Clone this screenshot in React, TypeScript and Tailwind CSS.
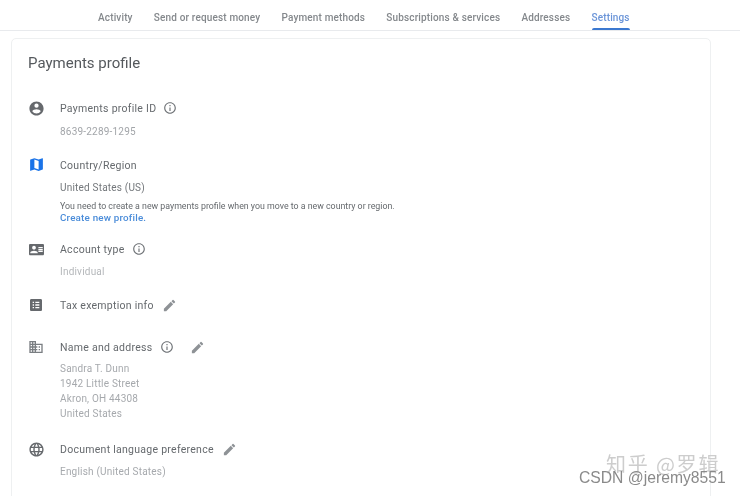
import React from "react";

const Icon = ({ d, className = "" }: { d: string; className?: string }) => (
  <svg viewBox="0 0 24 24" className={className} fill="currentColor"><path d={d} /></svg>
);

const PENCIL = "M3 17.25V21h3.75L17.81 9.94l-3.75-3.75L3 17.25zM20.71 7.04a1 1 0 0 0 0-1.41l-2.34-2.34a1 1 0 0 0-1.41 0l-1.83 1.83 3.75 3.75 1.83-1.83z";
const INFO = "M11 7h2v2h-2zm0 4h2v6h-2zm1-9C6.48 2 2 6.48 2 12s4.48 10 10 10 10-4.48 10-10S17.52 2 12 2zm0 18c-4.41 0-8-3.59-8-8s3.59-8 8-8 8 3.59 8 8-3.59 8-8 8z";

const Info = ({ className = "" }: { className?: string }) => <Icon d={INFO} className={`w-[14px] h-[14px] -translate-y-px text-[#6f7377] ${className}`} />;
const Pencil = ({ className = "" }: { className?: string }) => <Icon d={PENCIL} className={`w-[15px] h-[15px] -translate-y-px text-[#8e9296] ${className}`} />;

const Row = ({ icon, label, extra, mt, children }: { icon: React.ReactNode; label: string; extra?: React.ReactNode; mt: string; children?: React.ReactNode }) => (
  <div className={`flex ${mt}`}>
    <div className="w-[32px] shrink-0 h-[18px] flex items-center -translate-y-px text-[#66696d]">{icon}</div>
    <div className="min-w-0">
      <div className="h-[18px] flex items-center text-[10.5px] tracking-[0.27px] text-[#65696d]">
        <span>{label}</span>
        {extra}
      </div>
      {children}
    </div>
  </div>
);

const Value = ({ children, className = "" }: { children: React.ReactNode; className?: string }) => (
  <div className={`text-[10px] leading-[15px] tracking-[0.2px] ${className}`}>{children}</div>
);

const tabs = ["Activity", "Send or request money", "Payment methods", "Subscriptions & services", "Addresses", "Settings"];

export default function App() {
  return (
    <div className="relative w-[740px] h-[496px] overflow-hidden bg-white blur-[0.3px] font-['Roboto',sans-serif]">
      <nav className="h-[31px] border-b border-[#e8eaed] flex pl-[98px] gap-[21.2px]">
        {tabs.map((t) => (
          <div key={t} className={`relative h-[30px] pt-[11px] text-[10px] leading-[14px] font-medium tracking-[0.15px] ${t === "Settings" ? "text-[#6a94d8]" : "text-[#84888c]"}`}>
            {t}
            {t === "Settings" && <div className="absolute left-[1px] right-0 bottom-0 h-[2px] bg-[#3b78d0] rounded-t" />}
          </div>
        ))}
      </nav>
      <main className="ml-[11px] mt-[7px] w-[700px] h-[500px] border border-[#eef0f1] rounded-[5px] pl-[16px] pt-[14px]">
        <h1 className="text-[15px] leading-[20px] text-[#55595d]">Payments profile</h1>
        <Row mt="mt-[27px]" label="Payments profile ID" extra={<Info className="ml-[7px]" />} icon={<Icon className="w-[17px] h-[17px]" d="M12 2C6.48 2 2 6.48 2 12s4.48 10 10 10 10-4.48 10-10S17.52 2 12 2zm0 3a3 3 0 1 1 0 6 3 3 0 0 1 0-6zm0 14.2a7.2 7.2 0 0 1-6-3.22c.03-1.99 4-3.08 6-3.08s5.97 1.09 6 3.08a7.2 7.2 0 0 1-6 3.22z" />}>
          <Value className="mt-[6px] text-[#a2a5a9]">8639-2289-1295</Value>
        </Row>
        <Row mt="mt-[18px]" label="Country/Region" icon={<Icon className="w-[17px] h-[17px] text-[#1a73e8] -translate-y-px" d="M20.5 3l-.16.03L15 5.1 9 3 3.36 4.9c-.21.07-.36.25-.36.48V20.5a.5.5 0 0 0 .5.5l.16-.03L9 18.9l6 2.1 5.64-1.9c.21-.07.36-.25.36-.48V3.5a.5.5 0 0 0-.5-.5zM15 19l-6-2.11V5l6 2.11V19z" />}>
          <Value className="mt-[5px] text-[#73777b]">United States (US)</Value>
          <div className="mt-[5px] text-[8.8px] leading-[12px] text-[#65696d]">You need to create a new payments profile when you move to a new country or region.</div>
          <div className="text-[9.8px] leading-[12px] font-medium text-[#4a8cd9] tracking-[0.2px]">Create new profile.</div>
        </Row>
        <Row mt="mt-[17px]" label="Account type" extra={<Info className="ml-[7px]" />} icon={<Icon className="w-[15px] h-[15px] ml-[1px]" d="M22 3H2C.9 3 0 3.9 0 5v14c0 1.1.9 2 2 2h20c1.1 0 2-.9 2-2V5c0-1.1-.9-2-2-2zM8 6c1.66 0 3 1.34 3 3s-1.34 3-3 3-3-1.34-3-3 1.34-3 3-3zm6 12H2v-1c0-2 4-3.1 6-3.1s6 1.1 6 3.1v1zm8-8h-7V8h7v2zm0 3h-7v-2h7v2zm0 3h-7v-2h7v2z" />}>
          <Value className="mt-[5px] text-[#b4b7ba]">Individual</Value>
        </Row>
        <Row mt="mt-[18px]" label="Tax exemption info" extra={<Pencil className="ml-[8px]" />} icon={<Icon className="w-[16px] h-[16px]" d="M19 3H5c-1.1 0-2 .9-2 2v14c0 1.1.9 2 2 2h14c1.1 0 2-.9 2-2V5c0-1.1-.9-2-2-2zM9 17H7v-2h2v2zm0-4H7v-2h2v2zm0-4H7V7h2v2zm8 8h-6v-2h6v2zm0-4h-6v-2h6v2zm0-4h-6V7h6v2z" />} />
        <Row mt="mt-[24px]" label="Name and address" extra={<><Info className="ml-[8px]" /><Pencil className="ml-[16px]" /></>} icon={<Icon className="w-[16px] h-[16px] text-[#7a7e82]" d="M12 7V3H2v18h20V7H12zM6 19H4v-2h2v2zm0-4H4v-2h2v2zm0-4H4V9h2v2zm0-4H4V5h2v2zm4 12H8v-2h2v2zm0-4H8v-2h2v2zm0-4H8V9h2v2zm0-4H8V5h2v2zm10 12h-8v-2h2v-2h-2v-2h2v-2h-2V9h8v10zm-2-8h-2v2h2v-2zm0 4h-2v2h2v-2z" />}>
          <Value className="mt-[4px] text-[#a6a9ad]">Sandra T. Dunn</Value>
          <Value className="text-[#a6a9ad]">1942 Little Street</Value>
          <Value className="text-[#a6a9ad]">Akron, OH 44308</Value>
          <Value className="text-[#a6a9ad]">United States</Value>
        </Row>
        <Row mt="mt-[20px]" label="Document language preference" extra={<Pencil className="ml-[8px]" />} icon={<Icon className="w-[17px] h-[17px]" d="M11.99 2C6.47 2 2 6.48 2 12s4.47 10 9.99 10C17.52 22 22 17.52 22 12S17.52 2 11.99 2zm6.93 6h-2.95a15.65 15.65 0 0 0-1.38-3.56A8.03 8.03 0 0 1 18.92 8zM12 4.04c.83 1.2 1.48 2.53 1.91 3.96h-3.82c.43-1.43 1.08-2.76 1.91-3.96zM4.26 14C4.1 13.36 4 12.69 4 12s.1-1.36.26-2h3.38c-.08.66-.14 1.32-.14 2s.06 1.34.14 2H4.26zm.82 2h2.95c.32 1.25.78 2.45 1.38 3.56A7.99 7.99 0 0 1 5.08 16zm2.95-8H5.08a7.99 7.99 0 0 1 4.33-3.56A15.65 15.65 0 0 0 8.03 8zM12 19.96c-.83-1.2-1.48-2.53-1.91-3.96h3.82c-.43 1.43-1.08 2.76-1.91 3.96zM14.34 14H9.66c-.09-.66-.16-1.32-.16-2s.07-1.35.16-2h4.68c.09.65.16 1.32.16 2s-.07 1.34-.16 2zm.25 5.56c.6-1.11 1.06-2.31 1.38-3.56h2.95a8.03 8.03 0 0 1-4.33 3.56zM16.36 14c.08-.66.14-1.32.14-2s-.06-1.34-.14-2h3.38c.16.64.26 1.31.26 2s-.1 1.36-.26 2h-3.38z" />}>
          <Value className="mt-[5px] text-[#a6a9ad]">English (United States)</Value>
        </Row>
      </main>
      <div className="absolute left-[606px] top-[452px] text-[20px] leading-[24px] text-[#cdcdcd] tracking-[1.8px] font-['Noto_Sans_CJK_SC',sans-serif] whitespace-nowrap">知乎 @罗辑</div>
      <div className="absolute left-[579px] top-[469px] text-[15.7px] leading-[18px] text-[#8a8a8a] font-['Liberation_Sans',sans-serif] whitespace-nowrap">CSDN @jeremy8551</div>
    </div>
  );
}
